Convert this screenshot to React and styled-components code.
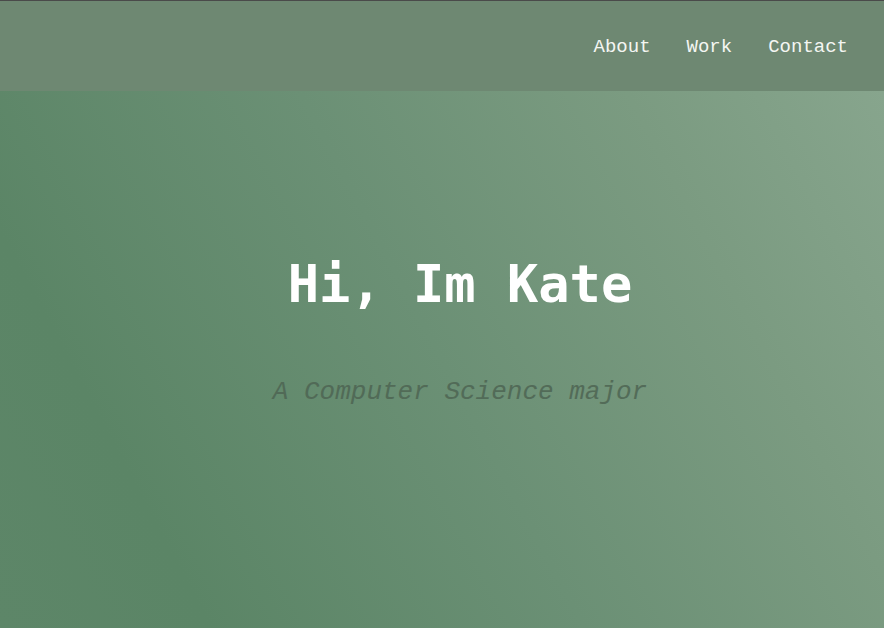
import React from "react";
import styled, { createGlobalStyle } from "styled-components";

const GlobalStyle = createGlobalStyle`
    html, body {
        margin: 0;
        padding: 0;
        background: #ffffff;
    }
    #root {
        height: 630px;
    }
`;

const Page = styled.div`
    width: 884px;
    height: 627px;
    border-top: 1px solid #4a4a4a;
    display: flex;
    flex-direction: column;
    overflow: hidden;
`;

const Header = styled.header`
    height: 90px;
    flex-shrink: 0;
    display: flex;
    align-items: center;
    justify-content: flex-end;
    padding-right: 36px;
    background: #6e8872;
`;

const Nav = styled.nav`
    display: flex;
    gap: 36px;
    margin-top: 1px;
`;

const NavLink = styled.a`
    font-family: "Liberation Mono", "Courier New", monospace;
    font-size: 19px;
    color: #f4f6f2;
    text-decoration: none;
    cursor: pointer;
`;

const Hero = styled.main`
    flex: 1;
    display: flex;
    flex-direction: column;
    align-items: center;
    padding-top: 155px;
    padding-left: 36px;
    background: linear-gradient(62deg, #5d8668 0%, #5b8566 18%, #6b9075 50%, #7b9b81 78%, #87a58d 100%);
`;

const Title = styled.h1`
    margin: 0;
    font-family: "DejaVu Sans Mono", monospace;
    font-weight: bold;
    font-size: 52px;
    line-height: 76px;
    color: #ffffff;
`;

const Subtitle = styled.p`
    margin: 55px 0 0;
    font-family: "Liberation Mono", "Courier New", monospace;
    font-style: italic;
    font-size: 26px;
    line-height: 30px;
    color: #4e6553;
    opacity: 0.85;
`;

const App = () => {
    return (
        <>
            <GlobalStyle />
            <Page>
                <Header>
                    <Nav>
                        <NavLink>About</NavLink>
                        <NavLink>Work</NavLink>
                        <NavLink>Contact</NavLink>
                    </Nav>
                </Header>
                <Hero>
                    <Title>Hi, Im Kate</Title>
                    <Subtitle>A Computer Science major</Subtitle>
                </Hero>
            </Page>
        </>
    );
};

export default App;
